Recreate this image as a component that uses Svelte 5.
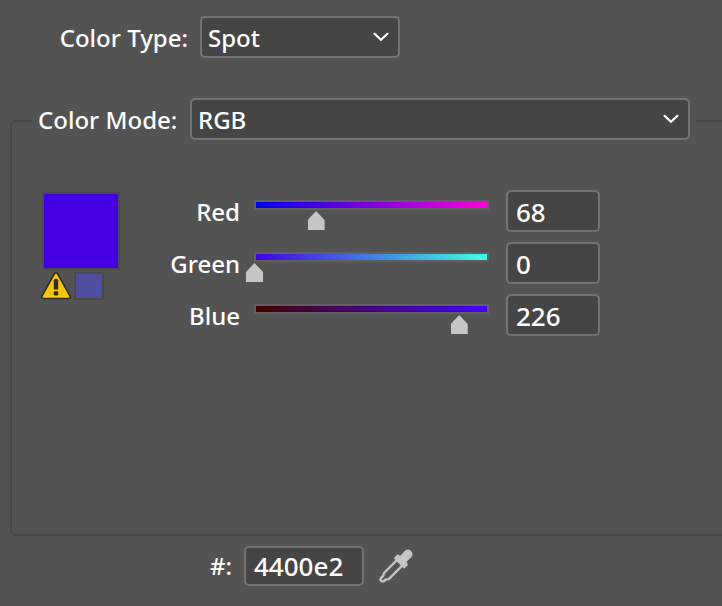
<script lang="ts">
  // Swatch options: colour type, colour mode and the RGB channel sliders.

  interface Channel {
    id: string;
    label: string;
    value: number;
  }

  let colorType = $state("Spot");
  let colorMode = $state("RGB");
  let channels = $state<Channel[]>([
    { id: "red", label: "Red", value: 68 },
    { id: "green", label: "Green", value: 0 },
    { id: "blue", label: "Blue", value: 226 },
  ]);

  const hex = $derived(channels.map((c) => Number(c.value).toString(16).padStart(2, "0")).join(""));

  // Track ends, one pair per channel.
  const ramps: Record<string, string> = {
    red: "#0000e8, #ff00dc",
    green: "#4400e2, #40ffe2",
    blue: "#440000, #4400ff",
  };

  function setHex(raw: string) {
    if (!/^[0-9a-f]{6}$/i.test(raw)) return;
    channels.forEach((c, i) => (c.value = parseInt(raw.slice(i * 2, i * 2 + 2), 16)));
  }
</script>

{#snippet chevron()}
  <svg class="chevron" viewBox="0 0 18 10" aria-hidden="true">
    <path d="M2.5 1.8 9 7.8l6.500-6" fill="none" stroke="#fff" stroke-width="2.200" stroke-linecap="round" />
  </svg>
{/snippet}

<main class="panel">
  <div class="type-row">
    <label for="color-type">Color Type:</label>
    <span class="select">
      <select id="color-type" bind:value={colorType}>
        <option>Spot</option>
        <option>Process</option>
      </select>
      {@render chevron()}
    </span>
  </div>

  <fieldset>
    <legend>
      <span class="mode-row">
        <label for="color-mode">Color Mode:</label>
        <span class="select grow">
          <select id="color-mode" bind:value={colorMode}>
            <option>RGB</option>
            <option>CMYK</option>
            <option>HSB</option>
            <option>Lab</option>
          </select>
          {@render chevron()}
        </span>
      </span>
    </legend>

    <div class="mixer">
      <div class="swatches">
        <div class="swatch" style:background-color={"#" + hex}></div>
        <div class="gamut">
          <button type="button" class="warn" aria-label="Out of gamut">
            <svg viewBox="0 0 30 28" aria-hidden="true">
              <path
                d="M13.300 1.900Q15 -.3 16.700 1.900L29 24.200Q29.800 26.500 27.700 26.500H2.300Q.2 26.500 1 24.200Z"
                fill="#f5c60c"
                stroke="#2e2a1c"
                stroke-width="1.600"
              />
              <rect x="12.800" y="7" width="4.400" height="10.500" rx="1.200" fill="#2e2a1c" />
              <rect x="12.800" y="19.200" width="4.400" height="4.200" rx="1" fill="#2e2a1c" />
            </svg>
          </button>
          <button type="button" class="nearest" aria-label="Use nearest printable color"></button>
        </div>
      </div>

      <div class="channels">
        {#each channels as channel (channel.id)}
          <label for={channel.id}>{channel.label}</label>
          <input
            type="range"
            min="0"
            max="255"
            style:--ramp={ramps[channel.id]}
            aria-label={channel.label + " slider"}
            bind:value={channel.value}
          />
          <input id={channel.id} class="field" type="text" bind:value={channel.value} />
        {/each}
      </div>
    </div>
  </fieldset>

  <div class="hex-row">
    <label for="hex">#:</label>
    <input
      id="hex"
      class="field"
      type="text"
      value={hex}
      onchange={(e) => setHex((e.currentTarget as HTMLInputElement).value)}
    />
    <button type="button" class="picker" aria-label="Pick color">
      <svg viewBox="0 0 34 34" aria-hidden="true">
        <path
          d="M17.500 11.500 5.500 23.500Q4.500 24.500 4.300 26.800Q.8 29.200 1.700 31.400Q3.800 33.600 6.600 30.600Q9.500 30.600 10.800 29.200L23 16.800"
          fill="none"
          stroke="#c6c6c6"
          stroke-width="2.400"
          stroke-linejoin="round"
        />
        <path
          d="M14.800 9.300 18.300 5.300 21.300 6.800 25.800 2Q28.500 -.6 31.500 1.400Q35 4.600 32.500 8L27.600 12.800 29 16 25 19.800Z"
          fill="#c6c6c6"
        />
      </svg>
    </button>
  </div>
</main>

<style>
  :global(body) {
    margin: 0;
    background: #535353;
  }
  .panel {
    --well: #454545;
    --edge: #737373;
    --rule: #474747;
    padding-top: 16px;
    overflow: hidden;
    color: #fff;
    font: 500 24px/32px "Noto Sans", "Open Sans", sans-serif;
  }
  .panel *,
  .panel {
    box-sizing: border-box;
  }
  select,
  input,
  button {
    margin: 0;
    font: inherit;
    color: inherit;
  }
  button {
    padding: 0;
    border: 0;
    background: none;
    cursor: pointer;
  }
  svg {
    display: block;
  }
  label {
    padding-top: 2px;
  }

  .type-row,
  .mode-row,
  .hex-row {
    display: flex;
    align-items: center;
    gap: 12px;
  }
  .type-row label {
    width: 188px;
    text-align: right;
  }

  .select {
    display: grid;
    align-items: center;
    width: 200px;
  }
  .select > :global(*) {
    grid-area: 1 / 1;
  }
  .select.grow {
    flex: 1;
  }
  select {
    appearance: none;
    width: 100%;
    height: 42px;
    padding: 2px 40px 0 6px;
    border: 2px solid var(--edge);
    border-radius: 5px;
    background: var(--well);
  }
  .chevron {
    justify-self: end;
    width: 18px;
    height: 10px;
    margin-right: 10px;
    pointer-events: none;
  }

  fieldset {
    min-width: 0;
    margin: 40px 0 0 10px;
    padding: 0 26px 198px 20px;
    border: 2px solid var(--rule);
    border-right: 0;
    border-radius: 6px 0 0 6px;
  }
  legend {
    width: 100%;
    padding: 0 6px 4px;
  }
  .mode-row label {
    width: 140px;
    white-space: nowrap;
  }

  .mixer {
    display: flex;
    padding: 46px 0 0 9px;
  }
  .swatches {
    width: 79px;
    padding-top: 2px;
  }
  .swatch {
    height: 78px;
    margin-left: 1px;
    border: 2px solid #4a4a4a;
  }
  .gamut {
    display: flex;
    gap: 3px;
    padding-top: 2px;
  }
  .warn svg {
    width: 30px;
    height: 28px;
  }
  .nearest {
    width: 30px;
    height: 28px;
    border: 2px solid #494949;
    background: #4f4da0;
  }

  .channels {
    display: grid;
    grid-template-columns: 120px 254px 106px;
    row-gap: 10px;
    align-items: center;
  }
  .channels label {
    text-align: right;
  }
  .channels .field {
    margin-left: 12px;
    width: 94px;
  }

  input[type="range"] {
    appearance: none;
    width: 248px;
    height: 42px;
    margin-left: 6px;
    background:
      linear-gradient(to right, var(--ramp)) 10px 12px / 231px 6px no-repeat,
      linear-gradient(#606060, #606060) 8px 10px / 235px 10px no-repeat;
  }
  input[type="range"]::-webkit-slider-runnable-track {
    height: 42px;
  }
  input[type="range"]::-webkit-slider-thumb {
    appearance: none;
    width: 17px;
    height: 19px;
    margin-top: 21px;
    background: #c6c6c6;
    clip-path: polygon(50% 0, 100% 48%, 100% 100%, 0 100%, 0 48%);
  }

  .field {
    height: 42px;
    padding: 2px 8px 0;
    border: 2px solid var(--edge);
    border-radius: 5px;
    background: var(--well);
    font-size: 26px;
  }

  .hex-row {
    padding: 10px 0 20px;
  }
  .hex-row label {
    width: 232px;
    padding-top: 0;
    text-align: right;
  }
  .hex-row .field {
    width: 120px;
    height: 40px;
    padding-top: 0;
  }
  .picker {
    margin-left: 3px;
  }
  .picker svg {
    width: 34px;
    height: 34px;
  }
</style>
